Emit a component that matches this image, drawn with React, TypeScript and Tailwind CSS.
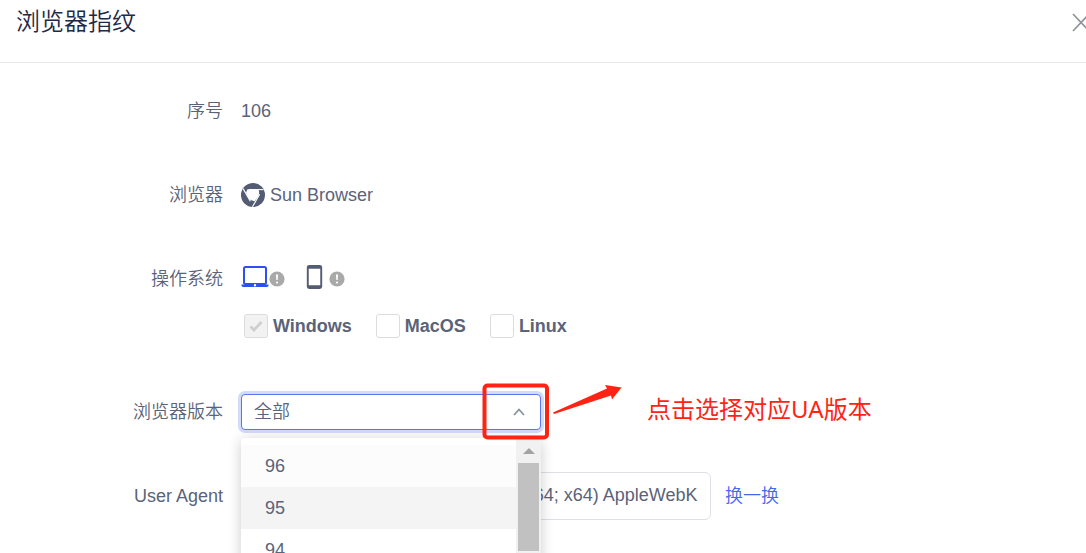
import React, { useState } from "react";

const VERSIONS = ["96", "95", "94", "93", "92"];

const SYSTEMS = [
  { name: "Windows", checked: true, disabled: true },
  { name: "MacOS", checked: false, disabled: false },
  { name: "Linux", checked: false, disabled: false },
];

interface RowProps {
  label: string;
  htmlFor?: string;
  children: React.ReactNode;
}

const Row: React.FC<RowProps> = ({ label, htmlFor, children }) => (
  <div className="flex">
    <label
      htmlFor={htmlFor}
      className="flex h-12 w-[223px] shrink-0 items-center justify-end"
    >
      {label}
    </label>
    <div className="ml-[18px] min-w-0 flex-1">{children}</div>
  </div>
);

const SunIcon = () => (
  <svg viewBox="0 0 24 24" className="size-6 shrink-0" aria-hidden="true">
    <circle cx="12" cy="12" r="12" fill="#535c72" />
    <path d="M6.500 6.200h11q1.500 4-.5 7.500l-3.500 4.500q-4-.2-6-3L5 9.500z" fill="#fff" />
    <g stroke="#fff" strokeWidth="1.100">
      <path d="M8 6.600H22.500" />
      <path d="M8 6.600H22.500" transform="rotate(120 12 12)" />
      <path d="M8 6.600H22.500" transform="rotate(240 12 12)" />
    </g>
  </svg>
);

const LaptopIcon = () => (
  <svg viewBox="0 0 28 24" className="h-6 w-7" aria-hidden="true">
    <rect x="3" y="2" width="22" height="17" rx="1.5" fill="none" stroke="#2f4ff0" strokeWidth="2" />
    <path d="M.5 19.500h27v1.200q-.6 1.300-2 1.300H2.500q-1.400 0-2-1.300z" fill="#2f4ff0" />
    <circle cx="14" cy="20.200" r="1.200" fill="#fff" />
  </svg>
);

const PhoneIcon = () => (
  <svg viewBox="0 0 17 25" className="h-6 w-[17px]" aria-hidden="true">
    <path
      fillRule="evenodd"
      fill="#535c72"
      d="M3 0h11Q16.500 0 16.500 2.500v20q0 2.500-2.500 2.500H3Q.5 25 .5 22.500v-20Q.5 0 3 0zM2.500 4v17h12V4z"
    />
  </svg>
);

const TipIcon = () => (
  <svg viewBox="0 0 16 16" className="mb-[2px] size-4" aria-hidden="true">
    <circle cx="8" cy="8" r="7.600" fill="#a9a9a9" />
    <path d="M7 3.500h2l-.3 5.500H7.300z" fill="#fff" />
    <circle cx="8" cy="11.500" r="1.100" fill="#fff" />
  </svg>
);

const VersionMenu = () => (
  <div className="absolute top-[50px] left-0 z-10 flex h-72 w-[300px] overflow-hidden rounded bg-white shadow-[0_2px_14px_rgba(0,0,0,0.2)]">
    <ul role="listbox" aria-label="浏览器版本" className="flex-1 pt-[7px]">
      {VERSIONS.map((version) => (
        <li
          key={version}
          role="option"
          aria-selected={version === "95"}
          className="flex h-[42px] items-center pl-6 first:bg-[#fcfcfc] aria-selected:bg-[#f4f4f4]"
        >
          {version}
        </li>
      ))}
    </ul>
    <div className="flex w-[25px] flex-col items-center bg-[#f1f1f1]" aria-hidden="true">
      <svg viewBox="0 0 12 6" className="mt-[10px] mb-[9px] h-[6px] w-3">
        <path d="M0 6 6 0l6 6z" fill="#a3a3a3" />
      </svg>
      <div className="h-[88px] w-[21px] bg-[#c1c1c1]" />
    </div>
  </div>
);

const Callout = () => (
  <svg
    viewBox="0 0 144 60"
    className="pointer-events-none absolute -top-[6px] left-[239px] z-20 h-[60px] w-[144px]"
    aria-hidden="true"
  >
    <rect x="4.500" y="3.500" width="62.500" height="52" rx="3" fill="none" stroke="#ff2314" strokeWidth="4" />
    <path d="M73 30.500 127 6.500 125 3 141.500 5.500 132 17.500 131 13.500 74 32z" fill="#ff2314" />
  </svg>
);

const App: React.FC = () => {
  const [systems, setSystems] = useState(SYSTEMS);

  const toggle = (name: string) =>
    setSystems(systems.map((s) => (s.name === name ? { ...s, checked: !s.checked } : s)));

  return (
    <div className="h-screen overflow-hidden bg-white font-['Liberation_Sans','Noto_Sans_CJK_SC',sans-serif] text-lg font-[350] text-[#5a6378]">
      <header className="flex h-[63px] items-start justify-between border-b border-[#e8e8e8] pl-4">
        <h1 className="pt-1 text-2xl leading-9 text-[#1d2947]">浏览器指纹</h1>
        <button type="button" aria-label="关闭" className="mt-3 -mr-1 shrink-0">
          <svg viewBox="0 0 18 20" className="h-5 w-[18px]" fill="none" stroke="#909399" strokeWidth="1.700">
            <path d="m1 2 16 17M17 2 1 19" />
          </svg>
        </button>
      </header>

      <form className="flex flex-col gap-9 pt-6">
        <Row label="序号">
          <div className="flex h-12 items-center">106</div>
        </Row>

        <Row label="浏览器">
          <div className="flex h-12 items-center gap-[5px]">
            <SunIcon />
            Sun Browser
          </div>
        </Row>

        <Row label="操作系统">
          <div className="flex h-11 items-center gap-[21px]">
            <button type="button" aria-label="桌面端" className="flex items-end">
              <LaptopIcon />
              <TipIcon />
            </button>
            <button type="button" aria-label="移动端" className="flex items-end gap-[6px]">
              <PhoneIcon />
              <TipIcon />
            </button>
          </div>
          <div className="flex h-[53px] items-center gap-6 pl-[3px]">
            {systems.map(({ name, checked, disabled }) => (
              <label key={name} className="flex items-center gap-[5px] font-bold">
                <span className="grid size-6">
                  <input
                    type="checkbox"
                    checked={checked}
                    disabled={disabled}
                    onChange={() => toggle(name)}
                    className="col-start-1 row-start-1 size-6 appearance-none rounded-[3px] border border-[#dcdcdf] bg-white disabled:bg-[#f2f2f2]"
                  />
                  {checked && (
                    <svg
                      viewBox="0 0 24 24"
                      className="pointer-events-none col-start-1 row-start-1 size-6"
                      fill="none"
                      stroke="#cfcfcf"
                      strokeWidth="2.800"
                    >
                      <path d="m6.500 12.500 3.500 3.500 7.500-8" />
                    </svg>
                  )}
                </span>
                {name}
              </label>
            ))}
          </div>
        </Row>

        <Row label="浏览器版本" htmlFor="version">
          <div className="flex h-12 items-center">
            <div className="relative flex h-12 w-[300px] shrink-0 items-center">
              <select
                id="version"
                className="h-9 w-full appearance-none rounded border border-[#5b76ee] bg-white pl-3 ring-3 ring-[#d3dbfb] outline-none"
              >
                <option>全部</option>
                {VERSIONS.map((version) => (
                  <option key={version}>{version}</option>
                ))}
              </select>
              <svg
                viewBox="0 0 12 8"
                className="pointer-events-none absolute right-4 h-2 w-3"
                fill="none"
                stroke="#8a919f"
                strokeWidth="1.800"
              >
                <path d="m1 7 5-5.500L11 7" />
              </svg>
              <VersionMenu />
              <Callout />
            </div>
            <p className="ml-[106px] pb-[6px] font-['Noto_Sans','Noto_Sans_CJK_SC',sans-serif] text-2xl font-normal whitespace-nowrap text-[#ff2314]">
              点击选择对应UA版本
            </p>
          </div>
        </Row>

        <Row label="User Agent" htmlFor="ua">
          <div className="flex items-center gap-[14px]">
            <input
              id="ua"
              type="text"
              defaultValue="Mozilla/5.0 (Windows NT 10.0; Win64; x64) AppleWebKit/537.36 (KHTML, like Gecko)"
              className="h-12 w-[470px] rounded-md border border-[#dcdfe6] px-3 pb-[2px] outline-none"
            />
            <a href="#" className="whitespace-nowrap text-[#4865ec]">
              换一换
            </a>
          </div>
        </Row>
      </form>
    </div>
  );
};

export default App;
